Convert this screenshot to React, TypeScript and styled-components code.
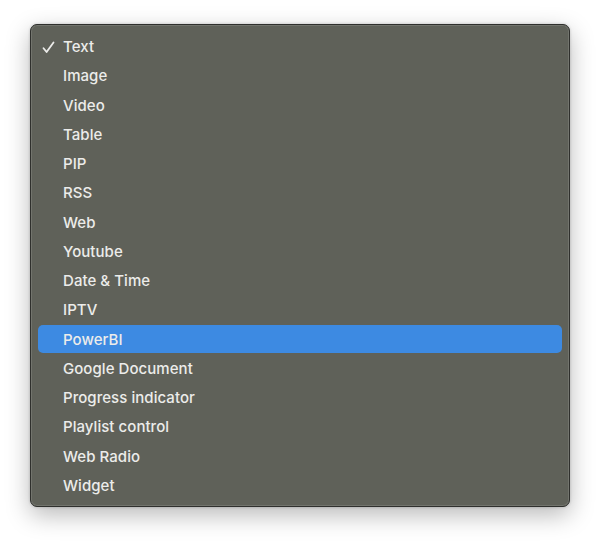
import styled, {createGlobalStyle} from 'styled-components';

const items = [
	'Text',
	'Image',
	'Video',
	'Table',
	'PIP',
	'RSS',
	'Web',
	'Youtube',
	'Date & Time',
	'IPTV',
	'PowerBI',
	'Google Document',
	'Progress indicator',
	'Playlist control',
	'Web Radio',
	'Widget',
];

const GlobalStyle = createGlobalStyle`
	html, body {
		margin: 0;
		padding: 0;
		background: #ffffff;
	}
	body {
		font-family: 'Inter', 'Liberation Sans', sans-serif;
	}
`;

const Page = styled.div`
	width: 600px;
	height: 543px;
	padding: 24px 30px 0;
	box-sizing: border-box;
`;

const Menu = styled.ul`
	list-style: none;
	margin: 0;
	width: 540px;
	height: 483px;
	box-sizing: border-box;
	padding: 7.5px 7px 6.5px;
	display: flex;
	flex-direction: column;
	gap: 1.27px;
	background-color: #5f6159;
	border: 1px solid #2f302d;
	border-radius: 7px;
	box-shadow:
		inset 0 0 0 1px rgba(255, 255, 255, 0.12),
		0 8px 24px rgba(0, 0, 0, 0.28),
		0 0 3px rgba(0, 0, 0, 0.2);
`;

const Item = styled.li<{$active?: boolean}>`
	position: relative;
	height: 28px;
	flex-shrink: 0;
	display: flex;
	align-items: center;
	padding-left: 25px;
	border-radius: 5px;
	font-size: 15px;
	font-weight: 500;
	letter-spacing: 0.05px;
	color: #ececea;
	background-color: ${(props) => (props.$active ? '#3d8ae2' : 'transparent')};
`;

const Check = styled.svg`
	position: absolute;
	left: 4px;
	top: 8px;
	width: 13px;
	height: 13px;
`;

function App() {
	return (
		<>
			<GlobalStyle />
			<Page>
				<Menu>
					{items.map((label, i) => (
						<Item key={label} $active={label === 'PowerBI'}>
							{i === 0 && (
								<Check viewBox="0 0 13 13">
									<path
										d="M1.5 7.2 L4.6 11 L11.5 1.5"
										fill="none"
										stroke="#ececea"
										strokeWidth="1.8"
										strokeLinecap="round"
										strokeLinejoin="round"
									/>
								</Check>
							)}
							{label}
						</Item>
					))}
				</Menu>
			</Page>
		</>
	);
}

export default App;
